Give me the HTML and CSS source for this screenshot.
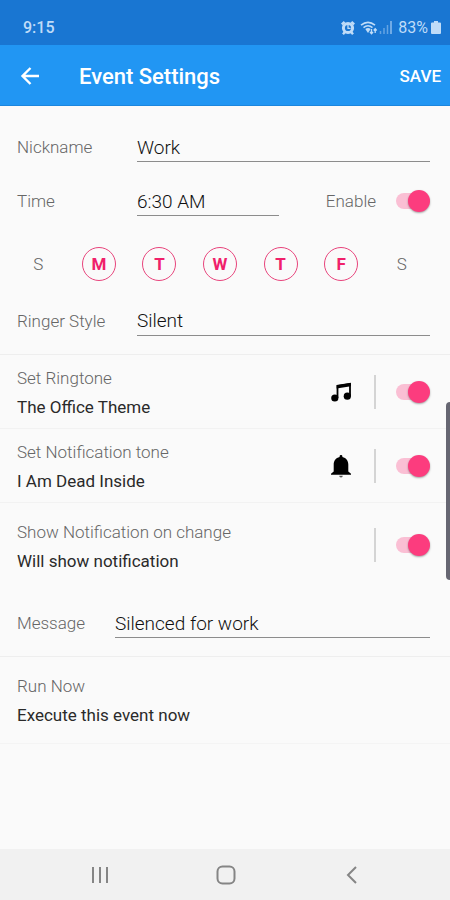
FILE: index.html
```html
<!DOCTYPE html>
<html lang="en">
<head>
<meta charset="utf-8">
<meta name="viewport" content="width=device-width, initial-scale=1">
<title>Event Settings</title>
<link rel="stylesheet" href="styles.css">
</head>
<body>
<div class="statusbar">
  <span>9:15</span>
  <div class="status-icons">
    <svg width="14" height="14" viewBox="0 0 14 14" aria-hidden="true"><circle cx="7" cy="7" r="4.6" fill="none" stroke="currentColor" stroke-width="3"/><path d="M.8 3.400 3.600.9M13.200 3.400 10.400.9M2 13.200l2-2.400M12 13.200l-2-2.400" stroke="currentColor" stroke-width="2.400"/><path d="M7 4V7.300H9.600" fill="none" stroke="currentColor" stroke-width="1.300"/></svg>
    <svg width="18" height="14" viewBox="0 0 18 14" aria-hidden="true"><path d="M1 4.200Q8 -1.500 15 4.200M3.500 6.600Q8 3 12.500 6.600" fill="none" stroke="currentColor" stroke-width="1.600"/><path d="M5.300 8Q8 6 10.700 8L8 12Z" fill="currentColor"/><path d="M11.500 8v4.500M10 11l1.500 1.800L13 11M15.200 12V7.800M13.700 9.500l1.500-1.800 1.500 1.800" fill="none" stroke="currentColor" stroke-width="1.300"/></svg>
    <svg class="signal" width="14" height="13" viewBox="0 0 14 13" aria-hidden="true"><path d="M1.500 10v3M5 7v6M8.500 4v9" stroke="currentColor" stroke-width="1.500" opacity=".45"/><path d="M12 0v13" stroke="currentColor" stroke-width="1.500" opacity=".7"/></svg>
    <span>83%</span>
    <svg class="battery" width="10" height="13" viewBox="0 0 10 13" aria-hidden="true"><path d="M3 0h4v1.500H9A1 1 0 0 1 10 2.500V12A1 1 0 0 1 9 13H1A1 1 0 0 1 0 12V2.500A1 1 0 0 1 1 1.500H3Z" fill="currentColor"/></svg>
  </div>
</div>
<header class="appbar">
  <button class="back" type="button" aria-label="Back"><svg width="20" height="20" viewBox="0 0 20 20" aria-hidden="true"><path d="M19 10H3M10.500 2 2.500 10l8 8" fill="none" stroke="currentColor" stroke-width="2.400"/></svg></button>
  <h1>Event Settings</h1>
  <button class="save" type="button">SAVE</button>
</header>
<main>
  <section class="details">
    <div class="field">
      <label for="nickname">Nickname</label>
      <input id="nickname" class="line" type="text" value="Work">
    </div>
    <div class="field">
      <label for="time">Time</label>
      <input id="time" class="line" type="text" value="6:30 AM">
      <label class="enable" for="enable">Enable</label>
      <input id="enable" class="switch" type="checkbox" role="switch" checked>
    </div>
    <div class="days">
      <button type="button" aria-pressed="false">S</button>
      <button type="button" aria-pressed="true">M</button>
      <button type="button" aria-pressed="true">T</button>
      <button type="button" aria-pressed="true">W</button>
      <button type="button" aria-pressed="true">T</button>
      <button type="button" aria-pressed="true">F</button>
      <button type="button" aria-pressed="false">S</button>
    </div>
    <div class="field">
      <label for="ringer">Ringer Style</label>
      <select id="ringer" class="line"><option>Silent</option></select>
    </div>
  </section>
  <section class="row">
    <label class="text" for="ringtone"><span>Set Ringtone</span><strong>The Office Theme</strong></label>
    <button class="icon" type="button" aria-label="Choose ringtone"><svg width="24" height="24" viewBox="0 0 24 24" aria-hidden="true"><path d="M8.500 18V6L21 4V16" fill="none" stroke="currentColor" stroke-width="1.800"/><path d="M7.600 5 21.900 2.700V6.200L7.600 8.500Z" fill="currentColor"/><circle cx="5.800" cy="18" r="3.600" fill="currentColor"/><circle cx="18.300" cy="16.200" r="3.600" fill="currentColor"/></svg></button>
    <input id="ringtone" class="switch" type="checkbox" role="switch" checked>
  </section>
  <section class="row">
    <label class="text" for="tone"><span>Set Notification tone</span><strong>I Am Dead Inside</strong></label>
    <button class="icon" type="button" aria-label="Choose notification tone"><svg width="24" height="24" viewBox="0 0 24 24" aria-hidden="true"><path d="M10.600 2.400a1.400 1.400 0 0 1 2.800 0v.7C17.300 4 19.300 7 19.300 10.500V17.500L22 19.700v1.100H2V19.700l2.700-2.200v-7C4.700 7 6.700 4 10.600 3.100Z" fill="currentColor"/><path d="M10.200 21.800h3.600a1.800 1.800 0 0 1-3.600 0Z" fill="#555"/></svg></button>
    <input id="tone" class="switch" type="checkbox" role="switch" checked>
  </section>
  <section class="notify">
    <div class="row">
      <label class="text" for="show"><span>Show Notification on change</span><strong>Will show notification</strong></label>
      <span class="icon"></span>
      <input id="show" class="switch" type="checkbox" role="switch" checked>
    </div>
    <div class="field message">
      <label for="message">Message</label>
      <input id="message" class="line" type="text" value="Silenced for work">
    </div>
  </section>
  <button class="text run" type="button"><span>Run Now</span><strong>Execute this event now</strong></button>
  <div class="edge"></div>
</main>
<nav class="navbar">
  <button type="button" aria-label="Recent apps"><svg width="20" height="20" viewBox="0 0 20 20" aria-hidden="true"><path d="M3 2v16M10 2v16M17 2v16" stroke="currentColor" stroke-width="2"/></svg></button>
  <button type="button" aria-label="Home"><svg width="20" height="20" viewBox="0 0 20 20" aria-hidden="true"><rect x="1.500" y="1.500" width="17" height="17" rx="5" fill="none" stroke="currentColor" stroke-width="2"/></svg></button>
  <button type="button" aria-label="Go back"><svg width="20" height="20" viewBox="0 0 20 20" aria-hidden="true"><path d="M14 2 6 10l8 8" fill="none" stroke="currentColor" stroke-width="2"/></svg></button>
</nav>
</body>
</html>
```
FILE: styles.css
```css
* { box-sizing: border-box; }
body {
  margin: 0;
  min-height: 100vh;
  display: flex;
  flex-direction: column;
  background: #fafafa;
  color: #111;
  font: 300 17px/20px Roboto, sans-serif;
}
button, input, select { font: inherit; color: inherit; margin: 0; padding: 0; border: 0; background: none; }

.statusbar {
  display: flex;
  justify-content: space-between;
  align-items: center;
  height: 45px;
  padding: 10px 9px 0 23px;
  background: #1976d2;
  color: #bfdcf8;
  font-size: 16px;
  font-weight: 500;
}
.status-icons { display: flex; align-items: center; gap: 5px; font-weight: 400; }
.status-icons .signal { margin-left: -4px; }
.status-icons .battery { margin-left: -2px; }

.appbar {
  display: flex;
  align-items: center;
  height: 61px;
  padding: 2px 9px 0 20px;
  background: #2196f3;
  border-bottom: 1px solid #1b86de;
  color: #fff;
}
.appbar h1 { flex: 1; margin: 0; padding-top: 2px; font-size: 22px; line-height: 28px; font-weight: 500; }
.back { width: 59px; height: 40px; text-align: left; }
.back svg { display: block; }
.save { font-weight: 500; height: 40px; }

main { position: relative; flex: 1; }
.details { padding: 27px 0 19px; border-bottom: 1px solid #eee; }
.field {
  display: flex;
  align-items: center;
  height: 28px;
  padding: 0 20px 0 17px;
  margin-bottom: 26px;
}
.field label { width: 120px; color: #666; }
.line {
  flex: 1;
  align-self: flex-start;
  min-width: 0;
  height: 29px;
  border-bottom: 1px solid #8c8c8c;
  font-size: 19px;
  appearance: none;
  border-radius: 0;
}
.field .enable { width: auto; margin: 0 20px 0 47px; }
.details .field:last-child { margin-bottom: 0; }

.days {
  display: grid;
  grid-template-columns: repeat(7, 1fr);
  justify-items: center;
  padding: 6px 18px 0 8px;
  margin-bottom: 26px;
}
.days button { width: 34px; height: 34px; color: #666; }
.days [aria-pressed="true"] {
  border: 1px solid #e8447c;
  border-radius: 50%;
  color: #f0206a;
  font-weight: 700;
}

.switch {
  appearance: none;
  position: relative;
  flex: none;
  width: 34px;
  height: 22px;
}
.switch::before {
  content: "";
  position: absolute;
  inset: 3px 4px 3px 0;
  border-radius: 8px;
  background: #fabfd4;
}
.switch::after {
  content: "";
  position: absolute;
  right: 0;
  width: 22px;
  height: 22px;
  border-radius: 50%;
  background: #fc3c7e;
  box-shadow: 0 1px 2px rgba(0, 0, 0, .35);
}

.row {
  display: flex;
  align-items: center;
  height: 74px;
  padding: 0 20px 0 17px;
  border-bottom: 1px solid #f2f2f2;
}
.text { display: block; flex: 1; text-align: left; }
.row .text { padding-top: 3px; }
.text span, .text strong { display: block; line-height: 29px; font-weight: inherit; }
.text span { color: #666; }
.text strong { font-weight: 400; color: #2a2a2a; }
.icon {
  display: flex;
  align-items: center;
  width: 47px;
  height: 34px;
  margin-right: 20px;
  border-right: 2px solid #d4d4d4;
  color: #000;
}
.notify { padding: 5px 0 19px; border-bottom: 1px solid #eee; }
.notify .row { border-bottom: 0; }
.message { margin: 27px 0 0; }
.message label { width: 98px; }
.run { width: 100%; padding: 15px 17px 13px; border-bottom: 1px solid #f4f4f4; }
.edge {
  position: absolute;
  top: 296px;
  right: 0;
  width: 4px;
  height: 178px;
  border-radius: 4px 0 0 4px;
  background: #666672;
}

.navbar {
  display: grid;
  grid-template-columns: repeat(3, 1fr);
  align-items: center;
  height: 51px;
  padding: 1px 35px 0 37px;
  background: #f1f1f1;
  color: #858585;
}
.navbar button { height: 40px; }
.navbar svg { display: block; margin: auto; }
```
